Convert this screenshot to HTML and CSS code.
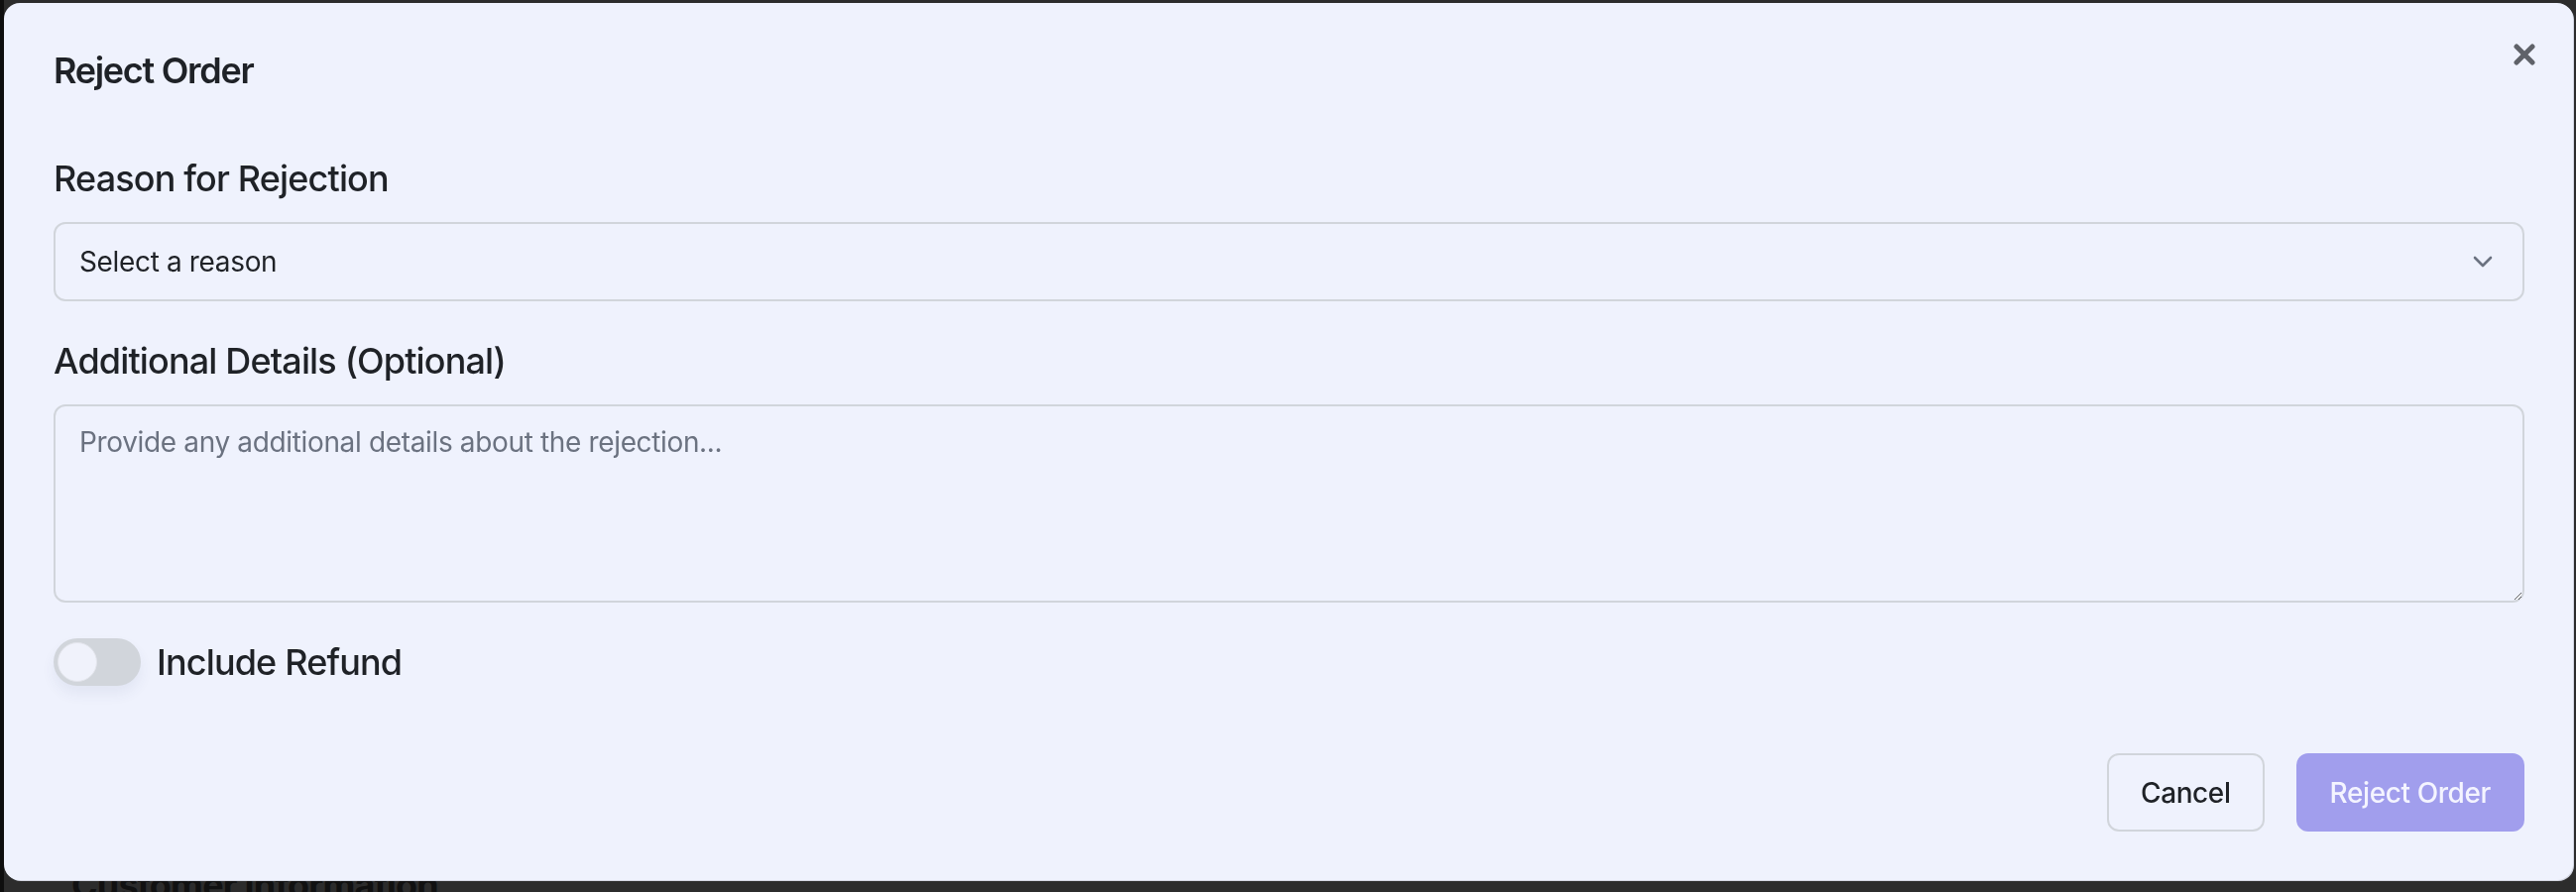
FILE: index.html
```html
<!DOCTYPE html>
<html>

<head>
    <meta charset="utf-8" />
    <title>Reject Order</title>
    <link rel="stylesheet" href="styles.css">
</head>

<body>
    <main class="page">
        <h2 class="section-title">Customer Information</h2>
    </main>

    <div class="modal">
        <button class="modal-close" aria-label="Close">
            <svg width="22" height="22" viewBox="0 0 22 22">
                <path d="M3 3L19 19M19 3L3 19" stroke="currentColor" stroke-width="5" stroke-linecap="round" fill="none" />
            </svg>
        </button>

        <h3 class="modal-title">Reject Order</h3>

        <div class="field">
            <label for="reason">Reason for Rejection</label>
            <div class="select-wrap">
                <select id="reason">
                    <option value="">Select a reason</option>
                    <option value="stock">Out of stock</option>
                    <option value="address">Invalid address</option>
                    <option value="other">Other</option>
                </select>
                <svg class="chevron" width="20" height="12" viewBox="0 0 20 12">
                    <path d="M2 2L10 10L18 2" stroke="currentColor" stroke-width="2.6" stroke-linecap="round" stroke-linejoin="round" fill="none" />
                </svg>
            </div>
        </div>

        <div class="field">
            <label for="details">Additional Details (Optional)</label>
            <textarea id="details" placeholder="Provide any additional details about the rejection..."></textarea>
        </div>

        <label class="switch-row">
            <input type="checkbox" class="switch-input">
            <span class="switch"><span class="switch-knob"></span></span>
            <span class="switch-label">Include Refund</span>
        </label>

        <div class="modal-footer">
            <button class="btn btn-outline">Cancel</button>
            <button class="btn btn-primary" disabled>Reject Order</button>
        </div>
    </div>
</body>

</html>
```

FILE: styles.css
```css
html,
body {
    margin: 0;
    height: 100%;
}

body {
    /* fond de la page derrière la fenêtre */
    background: #2c2c2c;
    border-left: 4px solid #0e0e0e;
    font-family: Inter, "Noto Sans", sans-serif;
    color: #1f2227;
    overflow: hidden;
}

.page {
    padding: 873px 0 0 68px;
}

.section-title {
    margin: 0;
    font-size: 36px;
    line-height: 40px;
    font-weight: 700;
    letter-spacing: -0.8px;
    color: #111;
}

/* fenêtre modale posée sur la page */
.modal {
    position: fixed;
    top: 3px;
    left: 4px;
    width: 2591px;
    height: 885px;
    box-sizing: border-box;
    padding: 50px 49px 49px 50px;
    display: flex;
    flex-direction: column;
    background: #eff2fd;
    border-radius: 16px;
    box-shadow: 1px 1px 0 #d2d5e0;
}

.modal-close {
    position: absolute;
    top: 41px;
    right: 38px;
    padding: 0;
    border: 0;
    background: none;
    color: #5f6269;
    cursor: pointer;
}

.modal-close svg {
    display: block;
}

.modal-title {
    margin: 0 0 63px;
    font-size: 36px;
    line-height: 36px;
    font-weight: 600;
    letter-spacing: -1.3px;
}

.field {
    margin-bottom: 32px;
}

.field label {
    display: block;
    margin-bottom: 16px;
    font-size: 36px;
    line-height: 56px;
    font-weight: 500;
    letter-spacing: -0.85px;
}

.select-wrap {
    position: relative;
}

select,
textarea {
    display: block;
    width: 100%;
    box-sizing: border-box;
    border: 2px solid #d1d5db;
    border-radius: 12px;
    background: transparent;
    font-family: inherit;
    font-size: 28px;
    letter-spacing: -0.35px;
    color: #1f2227;
}

select {
    height: 80px;
    padding: 0 70px 0 24px;
    appearance: none;
    -webkit-appearance: none;
}

.chevron {
    position: absolute;
    right: 32px;
    top: 34px;
    color: #6b7280;
    pointer-events: none;
}

textarea {
    height: 200px;
    padding: 16px 24px;
    line-height: 40px;
    resize: vertical;
}

textarea::placeholder {
    color: #6b7280;
}

.switch-row {
    display: flex;
    align-items: center;
    height: 56px;
    cursor: pointer;
}

.switch-input {
    display: none;
}

.switch {
    position: relative;
    width: 88px;
    height: 48px;
    border-radius: 24px;
    background: #d1d5db;
    box-shadow: 0 8px 14px rgba(60, 70, 110, 0.07);
}

.switch-knob {
    position: absolute;
    top: 4px;
    left: 4px;
    width: 40px;
    height: 40px;
    box-sizing: border-box;
    border-radius: 50%;
    background: #f0f2fb;
    border: 1px solid #e3e5ec;
}

.switch-label {
    margin-left: 16px;
    font-size: 36px;
    line-height: 56px;
    font-weight: 500;
    letter-spacing: -0.85px;
}

.modal-footer {
    margin-top: auto;
    display: flex;
    justify-content: flex-end;
    gap: 32px;
}

.btn {
    height: 79px;
    padding: 0 32px;
    border-radius: 12px;
    font-family: inherit;
    font-size: 28px;
    font-weight: 500;
    letter-spacing: -0.4px;
}

.btn-outline {
    border: 2px solid #d1d5db;
    background: transparent;
    color: #1f2227;
}

.btn-primary {
    border: 2px solid #a19eed;
    background: #a19eed;
    color: #f4f4ff;
}
```
